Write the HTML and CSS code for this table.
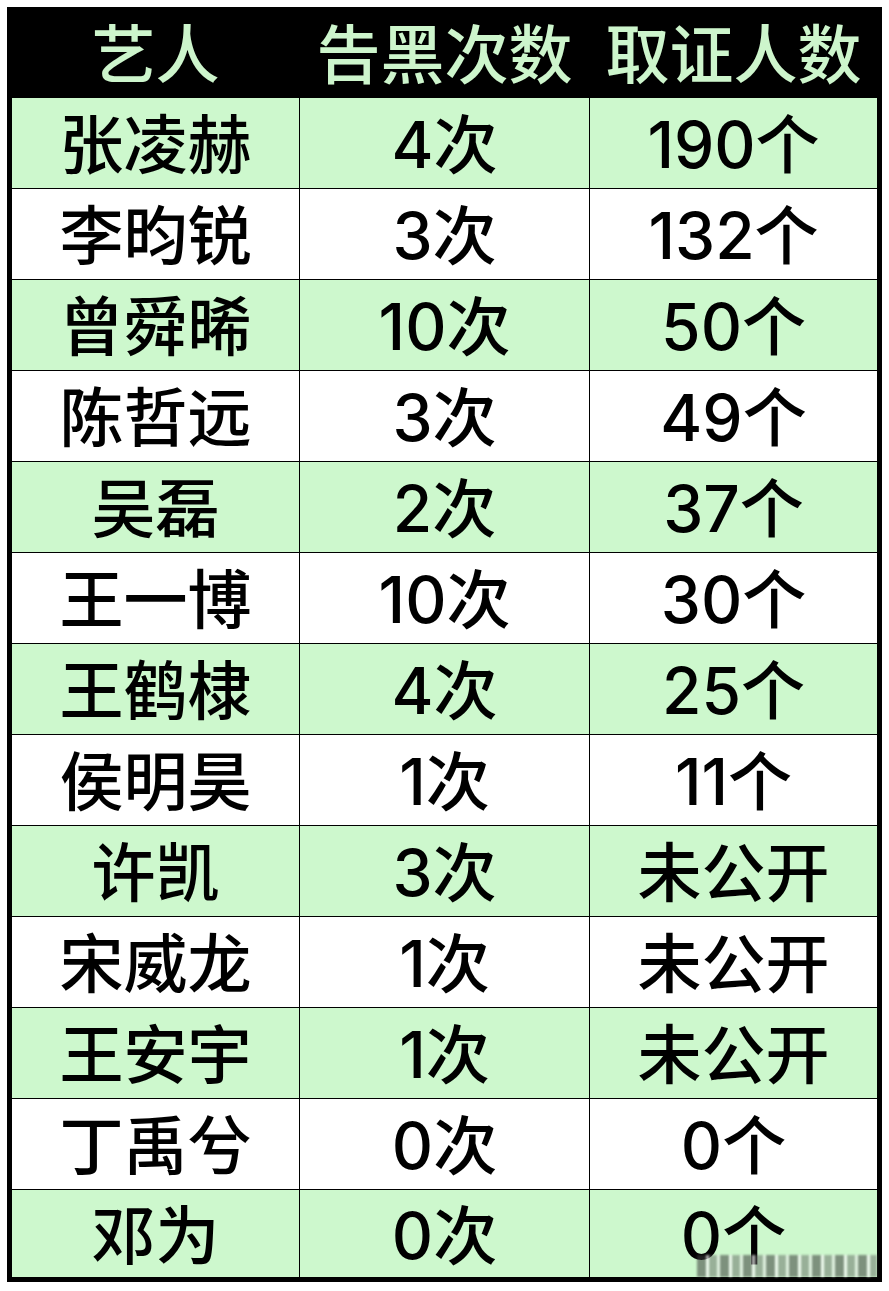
FILE: index.html
```html
<!DOCTYPE html>
<html lang="zh">
<head>
<meta charset="utf-8">
<title>告黑次数</title>
<link rel="stylesheet" href="styles.css">
</head>
<body>
<div class="sheet">
  <div class="table">
    <div class="row head"><div class="cell">艺人</div><div class="cell">告黑次数</div><div class="cell">取证人数</div></div>
    <div class="row g"><div class="cell">张凌赫</div><div class="cell">4次</div><div class="cell">190个</div></div>
    <div class="row"><div class="cell">李昀锐</div><div class="cell">3次</div><div class="cell">132个</div></div>
    <div class="row g"><div class="cell">曾舜晞</div><div class="cell">10次</div><div class="cell">50个</div></div>
    <div class="row"><div class="cell">陈哲远</div><div class="cell">3次</div><div class="cell">49个</div></div>
    <div class="row g"><div class="cell">吴磊</div><div class="cell">2次</div><div class="cell">37个</div></div>
    <div class="row"><div class="cell">王一博</div><div class="cell">10次</div><div class="cell">30个</div></div>
    <div class="row g"><div class="cell">王鹤棣</div><div class="cell">4次</div><div class="cell">25个</div></div>
    <div class="row"><div class="cell">侯明昊</div><div class="cell">1次</div><div class="cell">11个</div></div>
    <div class="row g"><div class="cell">许凯</div><div class="cell">3次</div><div class="cell">未公开</div></div>
    <div class="row"><div class="cell">宋威龙</div><div class="cell">1次</div><div class="cell">未公开</div></div>
    <div class="row g"><div class="cell">王安宇</div><div class="cell">1次</div><div class="cell">未公开</div></div>
    <div class="row"><div class="cell">丁禹兮</div><div class="cell">0次</div><div class="cell">0个</div></div>
    <div class="row g last"><div class="cell">邓为</div><div class="cell">0次</div><div class="cell">0个</div></div>
    <div class="watermark"></div>
  </div>
</div>
</body>
</html>
```

FILE: styles.css
```css
html, body {
  margin: 0;
  padding: 0;
  background: #ffffff;
}
.sheet {
  padding: 7px 0 0 7px;
}
.table {
  position: relative;
  width: 865px;
  border: 5px solid #000;
  font-family: Inter, "Noto Sans CJK SC", "Noto Sans", sans-serif;
  font-weight: 500;
  font-size: 64px;
  color: #000;
}
.row {
  display: grid;
  grid-template-columns: 287px 290px 288px;
  height: 90px;
  border-top: 1px solid #000;
  background: #fff;
}
.row.g {
  background: #cdf8cd;
}
.row.head {
  height: 85px;
  border-top: none;
  background: #000;
  color: #cdf5cc;
  font-size: 64px;
}
.row.last {
  height: 87px;
}
.cell {
  display: flex;
  align-items: center;
  justify-content: center;
  line-height: 1;
  border-left: 1px solid #000;
  padding-top: 4px;
}
.row.head .cell {
  padding-top: 0;
}
.cell:first-child {
  border-left: none;
}
.watermark {
  position: absolute;
  right: 0;
  bottom: 0;
  width: 180px;
  height: 22px;
  background: repeating-linear-gradient(90deg, rgba(60,60,60,0.55) 0 9px, rgba(255,255,255,0.7) 9px 12px, rgba(90,90,90,0.45) 12px 20px, rgba(240,240,240,0.6) 20px 23px);
  filter: blur(1px);
}
```
